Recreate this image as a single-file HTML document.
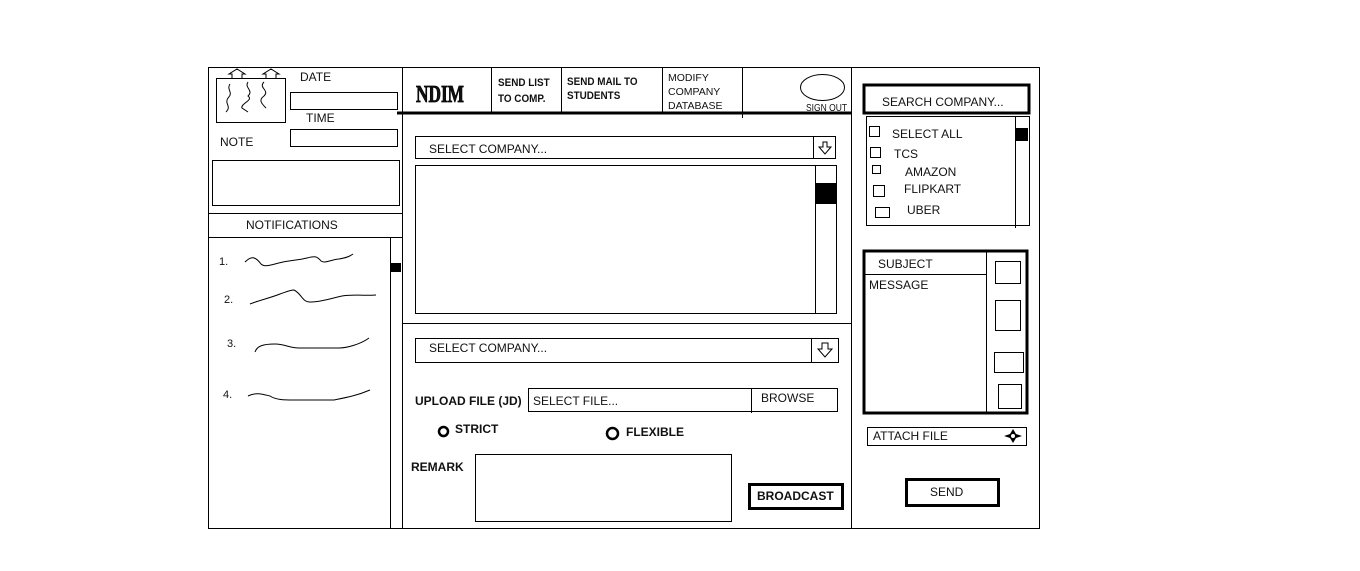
<!DOCTYPE html>
<html><head><meta charset="utf-8"><style>
body{margin:0;background:#fff;}
svg{display:block}
text{font-family:"Liberation Sans",sans-serif;font-size:12px;fill:#111}
.b{font-weight:bold}
</style></head><body>
<svg width="1360" height="571" viewBox="0 0 1360 571" xmlns="http://www.w3.org/2000/svg">
<g fill="none" stroke="#000" stroke-width="1">
<rect x="208.5" y="67.5" width="831" height="461"/>
<line x1="402.5" y1="67" x2="402.5" y2="528"/>
<line x1="851.5" y1="67" x2="851.5" y2="528"/>
<rect x="216.5" y="78.5" width="69" height="44"/>
<path d="M232 78 v-4 h-3 l8-5 l8 5 h-3 v4 M266 78 v-4 h-3 l8-5 l8 5 h-3 v4"/>
<path d="M230 84 c-4 6 4 8 -2 14 c-4 6 4 8 -2 14 M248 82 c-4 6 6 8 0 14 c6 4 -8 8 -6 12 l6 4 M264 82 c-6 6 6 8 0 14 c-6 4 -2 8 2 12"/>
<rect x="290.5" y="92.5" width="107" height="17"/>
<rect x="290.5" y="129.5" width="107" height="17"/>
<rect x="212.5" y="160.5" width="187" height="45"/>
<line x1="208" y1="213.5" x2="402" y2="213.5"/>
<line x1="208" y1="237.5" x2="402" y2="237.5"/>
<line x1="390.5" y1="237" x2="390.5" y2="528"/>
<path d="M245 262 c6-6 10-6 16 2 c4 4 12 0 22 -2 c10 -2 16 -2 24 -4 c8-2 10-2 14 3 c4 3 12-2 18-2 c6-1 10-2 14-5"/>
<path d="M250 304 c10-4 20-6 30-10 c6-2 10-4 14-4 c8 4 8 12 16 12 c12 0 22-4 32-6 c10-2 20 0 34-1"/>
<path d="M255 352 c2-6 8-8 20-8 c10 0 14 4 24 4 h40 c8 0 22-4 30-10"/>
<path d="M248 396 c8-4 14-2 22 0 c6 4 14 4 24 4 h40 c10-2 22-4 36-10"/>
<line x1="397" y1="113" x2="851" y2="113" stroke-width="3"/>
<line x1="491.5" y1="67" x2="491.5" y2="112"/>
<line x1="561.5" y1="67" x2="561.5" y2="112"/>
<line x1="662.5" y1="67" x2="662.5" y2="112"/>
<line x1="742.5" y1="67" x2="742.5" y2="118"/>
<ellipse cx="822.5" cy="87.5" rx="22" ry="13"/>
<rect x="415.5" y="136.5" width="420" height="22"/>
<line x1="813.5" y1="136" x2="813.5" y2="158"/>
<path d="M823 142 v5 h-4 l6 7 l6-7 h-4 v-5 z"/>
<rect x="415.5" y="165.5" width="421" height="148"/>
<line x1="815.5" y1="165" x2="815.5" y2="314"/>
<line x1="402" y1="323.5" x2="851" y2="323.5"/>
<rect x="415.5" y="338.5" width="423" height="24"/>
<line x1="811.5" y1="338" x2="811.5" y2="362"/>
<path d="M822 343 v6 h-4 l7 8 l7-8 h-4 v-6 z"/>
<rect x="528.5" y="388.5" width="309" height="23"/>
<line x1="751.5" y1="388" x2="751.5" y2="413"/>
<circle cx="443.5" cy="431.5" r="4.5" stroke-width="2.5"/>
<circle cx="612.5" cy="433.5" r="5.5" stroke-width="2.5"/>
<rect x="475.5" y="454.5" width="256" height="67"/>
<rect x="749.5" y="484.5" width="93" height="24" stroke-width="3"/>
<rect x="864" y="85" width="165" height="28" stroke-width="3"/>
<rect x="866.5" y="116.5" width="163" height="109"/>
<line x1="1015.5" y1="116" x2="1015.5" y2="228"/>
<rect x="869.5" y="126.5" width="10" height="10"/>
<rect x="870.5" y="147.5" width="10" height="10"/>
<rect x="872.5" y="165.5" width="8" height="8"/>
<rect x="873.5" y="185.5" width="11" height="11"/>
<rect x="875.5" y="207.5" width="14" height="10"/>
<rect x="864" y="251" width="163" height="162" stroke-width="3"/>
<line x1="986.5" y1="251" x2="986.5" y2="413"/>
<line x1="864" y1="274.5" x2="986" y2="274.5"/>
<rect x="995.5" y="261.5" width="25" height="22"/>
<rect x="995.5" y="300.5" width="25" height="30"/>
<rect x="994.5" y="352.5" width="29" height="20"/>
<rect x="998.5" y="384.5" width="23" height="24"/>
<rect x="867.5" y="427.5" width="159" height="18"/>
<rect x="906.5" y="479.5" width="92" height="26" stroke-width="3"/>
</g>
<g fill="#000">
<rect x="391" y="263" width="10" height="9"/>
<rect x="816" y="183" width="20" height="21"/>
<rect x="1016" y="128" width="12" height="13"/>
<path d="M1013 429 l3 5 l6 2 l-6 2 l-3 5 l-3-5 l-6-2 l6-2 z"/>
<circle cx="1013" cy="436" r="2" fill="#fff"/>
</g>
<text x="300" y="81">DATE</text>
<text x="306" y="122">TIME</text>
<text x="220" y="146">NOTE</text>
<text x="246" y="229">NOTIFICATIONS</text>
<text x="219" y="265" style="font-size:11px">1.</text>
<text x="224" y="303" style="font-size:11px">2.</text>
<text x="227" y="347" style="font-size:11px">3.</text>
<text x="223" y="398" style="font-size:11px">4.</text>
<text x="0" y="0" transform="translate(416 102) scale(0.72 1)" style="font-family:'Liberation Serif',serif;font-size:24px;font-weight:900;stroke:#000;stroke-width:0.8">NDIM</text>
<text x="0" y="0" class="b" transform="translate(498 86) scale(0.9 1)" style="font-size:11px">SEND LIST</text>
<text x="0" y="0" class="b" transform="translate(498 102) scale(0.9 1)" style="font-size:11px">TO COMP.</text>
<text x="0" y="0" class="b" transform="translate(567 85) scale(0.9 1)" style="font-size:11px">SEND MAIL TO</text>
<text x="0" y="0" class="b" transform="translate(567 99) scale(0.9 1)" style="font-size:11px">STUDENTS</text>
<text x="668" y="81" style="font-size:10.5px">MODIFY</text>
<text x="668" y="95" style="font-size:10.5px">COMPANY</text>
<text x="668" y="109" style="font-size:10.5px">DATABASE</text>
<text x="0" y="0" transform="translate(806 111) scale(0.85 1)" style="font-size:10px">SIGN OUT</text>
<text x="429" y="153">SELECT COMPANY...</text>
<text x="429" y="352">SELECT COMPANY...</text>
<text x="415" y="405" class="b">UPLOAD FILE (JD)</text>
<text x="533" y="405">SELECT FILE...</text>
<text x="761" y="402">BROWSE</text>
<text x="455" y="433" class="b">STRICT</text>
<text x="626" y="436" class="b">FLEXIBLE</text>
<text x="411" y="471" class="b">REMARK</text>
<text x="757" y="500" class="b">BROADCAST</text>
<text x="882" y="106">SEARCH COMPANY...</text>
<text x="892" y="138">SELECT ALL</text>
<text x="894" y="158">TCS</text>
<text x="905" y="176">AMAZON</text>
<text x="904" y="193">FLIPKART</text>
<text x="907" y="214">UBER</text>
<text x="878" y="268">SUBJECT</text>
<text x="869" y="289">MESSAGE</text>
<text x="873" y="440">ATTACH FILE</text>
<text x="930" y="496">SEND</text>
</svg>
</body></html>
